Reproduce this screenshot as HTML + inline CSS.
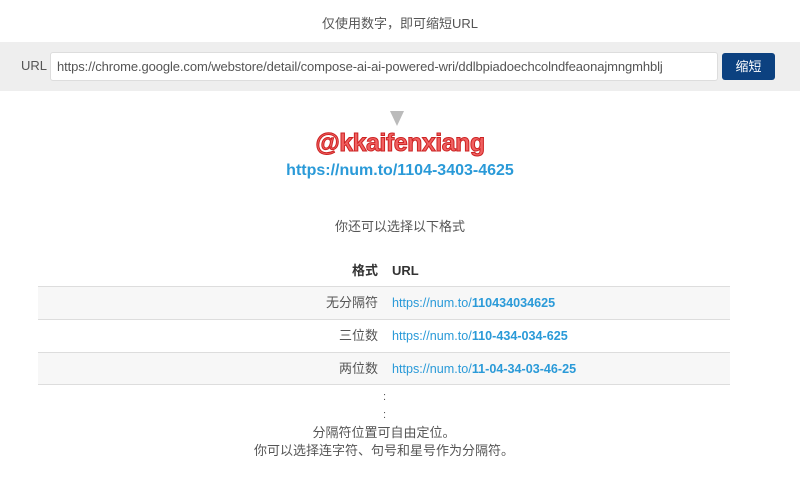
<!DOCTYPE html>
<html><head><meta charset="utf-8"><style>
*{margin:0;padding:0;box-sizing:border-box}
body{width:800px;height:478px;background:#fff;font-family:"Liberation Sans","Noto Sans CJK SC",sans-serif;color:#444;position:relative;overflow:hidden}
.a{position:absolute;line-height:16px}
.c{left:0;width:800px;text-align:center}
</style></head><body>
<div class="a c" style="top:16px;font-size:13px;color:#555">仅使用数字，即可缩短URL</div>
<div class="a" style="top:42px;left:0;width:800px;height:49px;background:#eee"></div>
<div class="a" style="top:58px;left:21px;font-size:13px;color:#555">URL</div>
<div class="a" style="top:52px;left:50px;width:668px;height:29px;background:#fff;border:1px solid #ddd;border-radius:3px;font-size:13px;color:#555;padding:6px 0 0 6px;white-space:nowrap;overflow:hidden;letter-spacing:-0.1px">https://chrome.google.com/webstore/detail/compose-ai-ai-powered-wri/ddlbpiadoechcolndfeaonajmngmhblj</div>
<div class="a" style="top:53px;left:722px;width:53px;height:27px;background:#0c4180;border-radius:3px;color:#fff;font-size:13px;text-align:center;line-height:27px">缩短</div>
<div class="a" style="top:111px;left:390px;width:0;height:0;border-left:7px solid transparent;border-right:7px solid transparent;border-top:15px solid #bbb"></div>
<div class="a c" style="top:130px;font-size:25px;line-height:26px;font-weight:bold;color:#f06060;-webkit-text-stroke:1px #c22;letter-spacing:-0.5px">@kkaifenxiang</div>
<div class="a c" style="top:163px;font-size:16px;font-weight:bold;color:#2a9ad8">https://num.to/1104-3403-4625</div>
<div class="a c" style="top:219px;font-size:13px;color:#555">你还可以选择以下格式</div>
<div class="a" style="top:263px;left:300px;width:78px;text-align:right;font-size:13px;font-weight:bold;color:#333">格式</div>
<div class="a" style="top:263px;left:392px;font-size:13px;font-weight:bold;color:#333">URL</div>
<div class="a" style="top:286px;left:38px;width:692px;height:33px;background:#f7f7f7;border-top:1px solid #ddd"></div>
<div class="a" style="top:319px;left:38px;width:692px;height:33px;background:#fff;border-top:1px solid #ddd"></div>
<div class="a" style="top:352px;left:38px;width:692px;height:33px;background:#f7f7f7;border-top:1px solid #ddd;border-bottom:1px solid #ddd"></div>
<div class="a" style="top:295px;left:280px;width:98px;text-align:right;font-size:13px;color:#555">无分隔符</div>
<div class="a" style="top:295px;left:392px;font-size:12.6px;color:#2a9ad8">https://num.to/<b>110434034625</b></div>
<div class="a" style="top:328px;left:280px;width:98px;text-align:right;font-size:13px;color:#555">三位数</div>
<div class="a" style="top:328px;left:392px;font-size:12.6px;color:#2a9ad8">https://num.to/<b>110-434-034-625</b></div>
<div class="a" style="top:361px;left:280px;width:98px;text-align:right;font-size:13px;color:#555">两位数</div>
<div class="a" style="top:361px;left:392px;font-size:12.6px;color:#2a9ad8">https://num.to/<b>11-04-34-03-46-25</b></div>
<div class="a" style="top:389px;left:383px;font-size:11px;color:#555">:</div>
<div class="a" style="top:407px;left:383px;font-size:11px;color:#555">:</div>
<div class="a" style="top:425px;left:0;width:768px;text-align:center;font-size:13px;color:#555">分隔符位置可自由定位。</div>
<div class="a" style="top:443px;left:0;width:768px;text-align:center;font-size:13px;color:#555">你可以选择连字符、句号和星号作为分隔符。</div>
</body></html>
